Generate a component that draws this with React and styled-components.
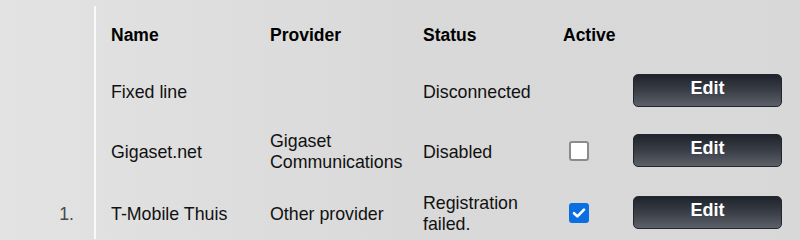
import React from "react";
import styled, { createGlobalStyle } from "styled-components";

const Global = createGlobalStyle`
  html, body { margin: 0; padding: 0; }
  body {
    width: 800px;
    height: 239px;
    overflow: hidden;
    background: linear-gradient(to right, #e3e3e3 0px, #dedede 200px, #d9d9d9 420px, #d8d8d8 800px);
    font-family: "Liberation Sans", Arial, sans-serif;
    color: #111;
  }
`;

const Page = styled.div`
  display: flex;
  padding-top: 6px;
`;

const Gutter = styled.div`
  width: 94px;
  display: grid;
  grid-template-rows: 54px 60px 60px 64px;
`;

const RowNumber = styled.div`
  display: flex;
  align-items: center;
  justify-content: flex-end;
  padding-right: 20px;
  padding-top: 5px;
  font-size: 17.8px;
  color: #4a4a4a;
`;

const Table = styled.div`
  border-left: 2px solid #fafafa;
  padding-left: 15px;
  display: grid;
  grid-template-columns: 159px 153px 140px 70px 149px;
  grid-template-rows: 54px 60px 60px 64px;
  align-items: center;
`;

const Head = styled.div`
  font-weight: bold;
  font-size: 17.5px;
  color: #000;
  padding-top: 5px;
`;

const Cell = styled.div`
  font-size: 17.8px;
  line-height: 21px;
  color: #111;
  padding-top: ${(p) => (p.$multi ? "4px" : "5px")};
`;

const CheckCell = styled.div`
  padding-left: 6px;
  display: flex;
  align-items: center;
  padding-top: 1px;
`;

const Box = styled.span`
  width: 20px;
  height: 20px;
  box-sizing: border-box;
  border-radius: 3px;
  display: flex;
  align-items: center;
  justify-content: center;
  background: ${(p) => (p.$checked ? "#0b6fe3" : "#ffffff")};
  border: 2px solid ${(p) => (p.$checked ? "#0b6fe3" : "#8b8b8b")};
`;

const EditButton = styled.button`
  display: block;
  width: 149px;
  height: 33px;
  border: 1px solid #23262d;
  border-radius: 5px;
  background: linear-gradient(to bottom, #1f232b 0%, #3a3e47 50%, #5b6069 100%);
  color: #fff;
  font-family: "Liberation Sans", Arial, sans-serif;
  font-weight: bold;
  font-size: 18px;
  padding: 0 0 3px;
  cursor: pointer;
`;

const Checkbox = ({ checked }) => (
  <Box $checked={checked}>
    {checked && (
      <svg width="14" height="12" viewBox="0 0 14 12">
        <path d="M2 6.2 L5.4 9.4 L12 2.6" fill="none" stroke="#fff" strokeWidth="2.6" strokeLinecap="round" strokeLinejoin="round" />
      </svg>
    )}
  </Box>
);

const rows = [
  { num: "", name: "Fixed line", provider: "", status: "Disconnected", active: null },
  { num: "", name: "Gigaset.net", provider: ["Gigaset", "Communications"], status: "Disabled", active: false },
  { num: "1.", name: "T-Mobile Thuis", provider: "Other provider", status: ["Registration", "failed."], active: true },
];

const Multi = ({ v }) =>
  Array.isArray(v) ? (
    <Cell $multi>
      {v.map((l, i) => (
        <div key={i}>{l}</div>
      ))}
    </Cell>
  ) : (
    <Cell>{v}</Cell>
  );

export default function App() {
  return (
    <>
      <Global />
      <Page>
        <Gutter>
          <RowNumber />
          {rows.map((r, i) => (
            <RowNumber key={i}>{r.num}</RowNumber>
          ))}
        </Gutter>
        <Table>
          <Head>Name</Head>
          <Head>Provider</Head>
          <Head>Status</Head>
          <Head>Active</Head>
          <div />
          {rows.map((r, i) => (
            <React.Fragment key={i}>
              <Multi v={r.name} />
              <Multi v={r.provider} />
              <Multi v={r.status} />
              <CheckCell>{r.active !== null && <Checkbox checked={r.active} />}</CheckCell>
              <div>
                <EditButton>Edit</EditButton>
              </div>
            </React.Fragment>
          ))}
        </Table>
      </Page>
    </>
  );
}
